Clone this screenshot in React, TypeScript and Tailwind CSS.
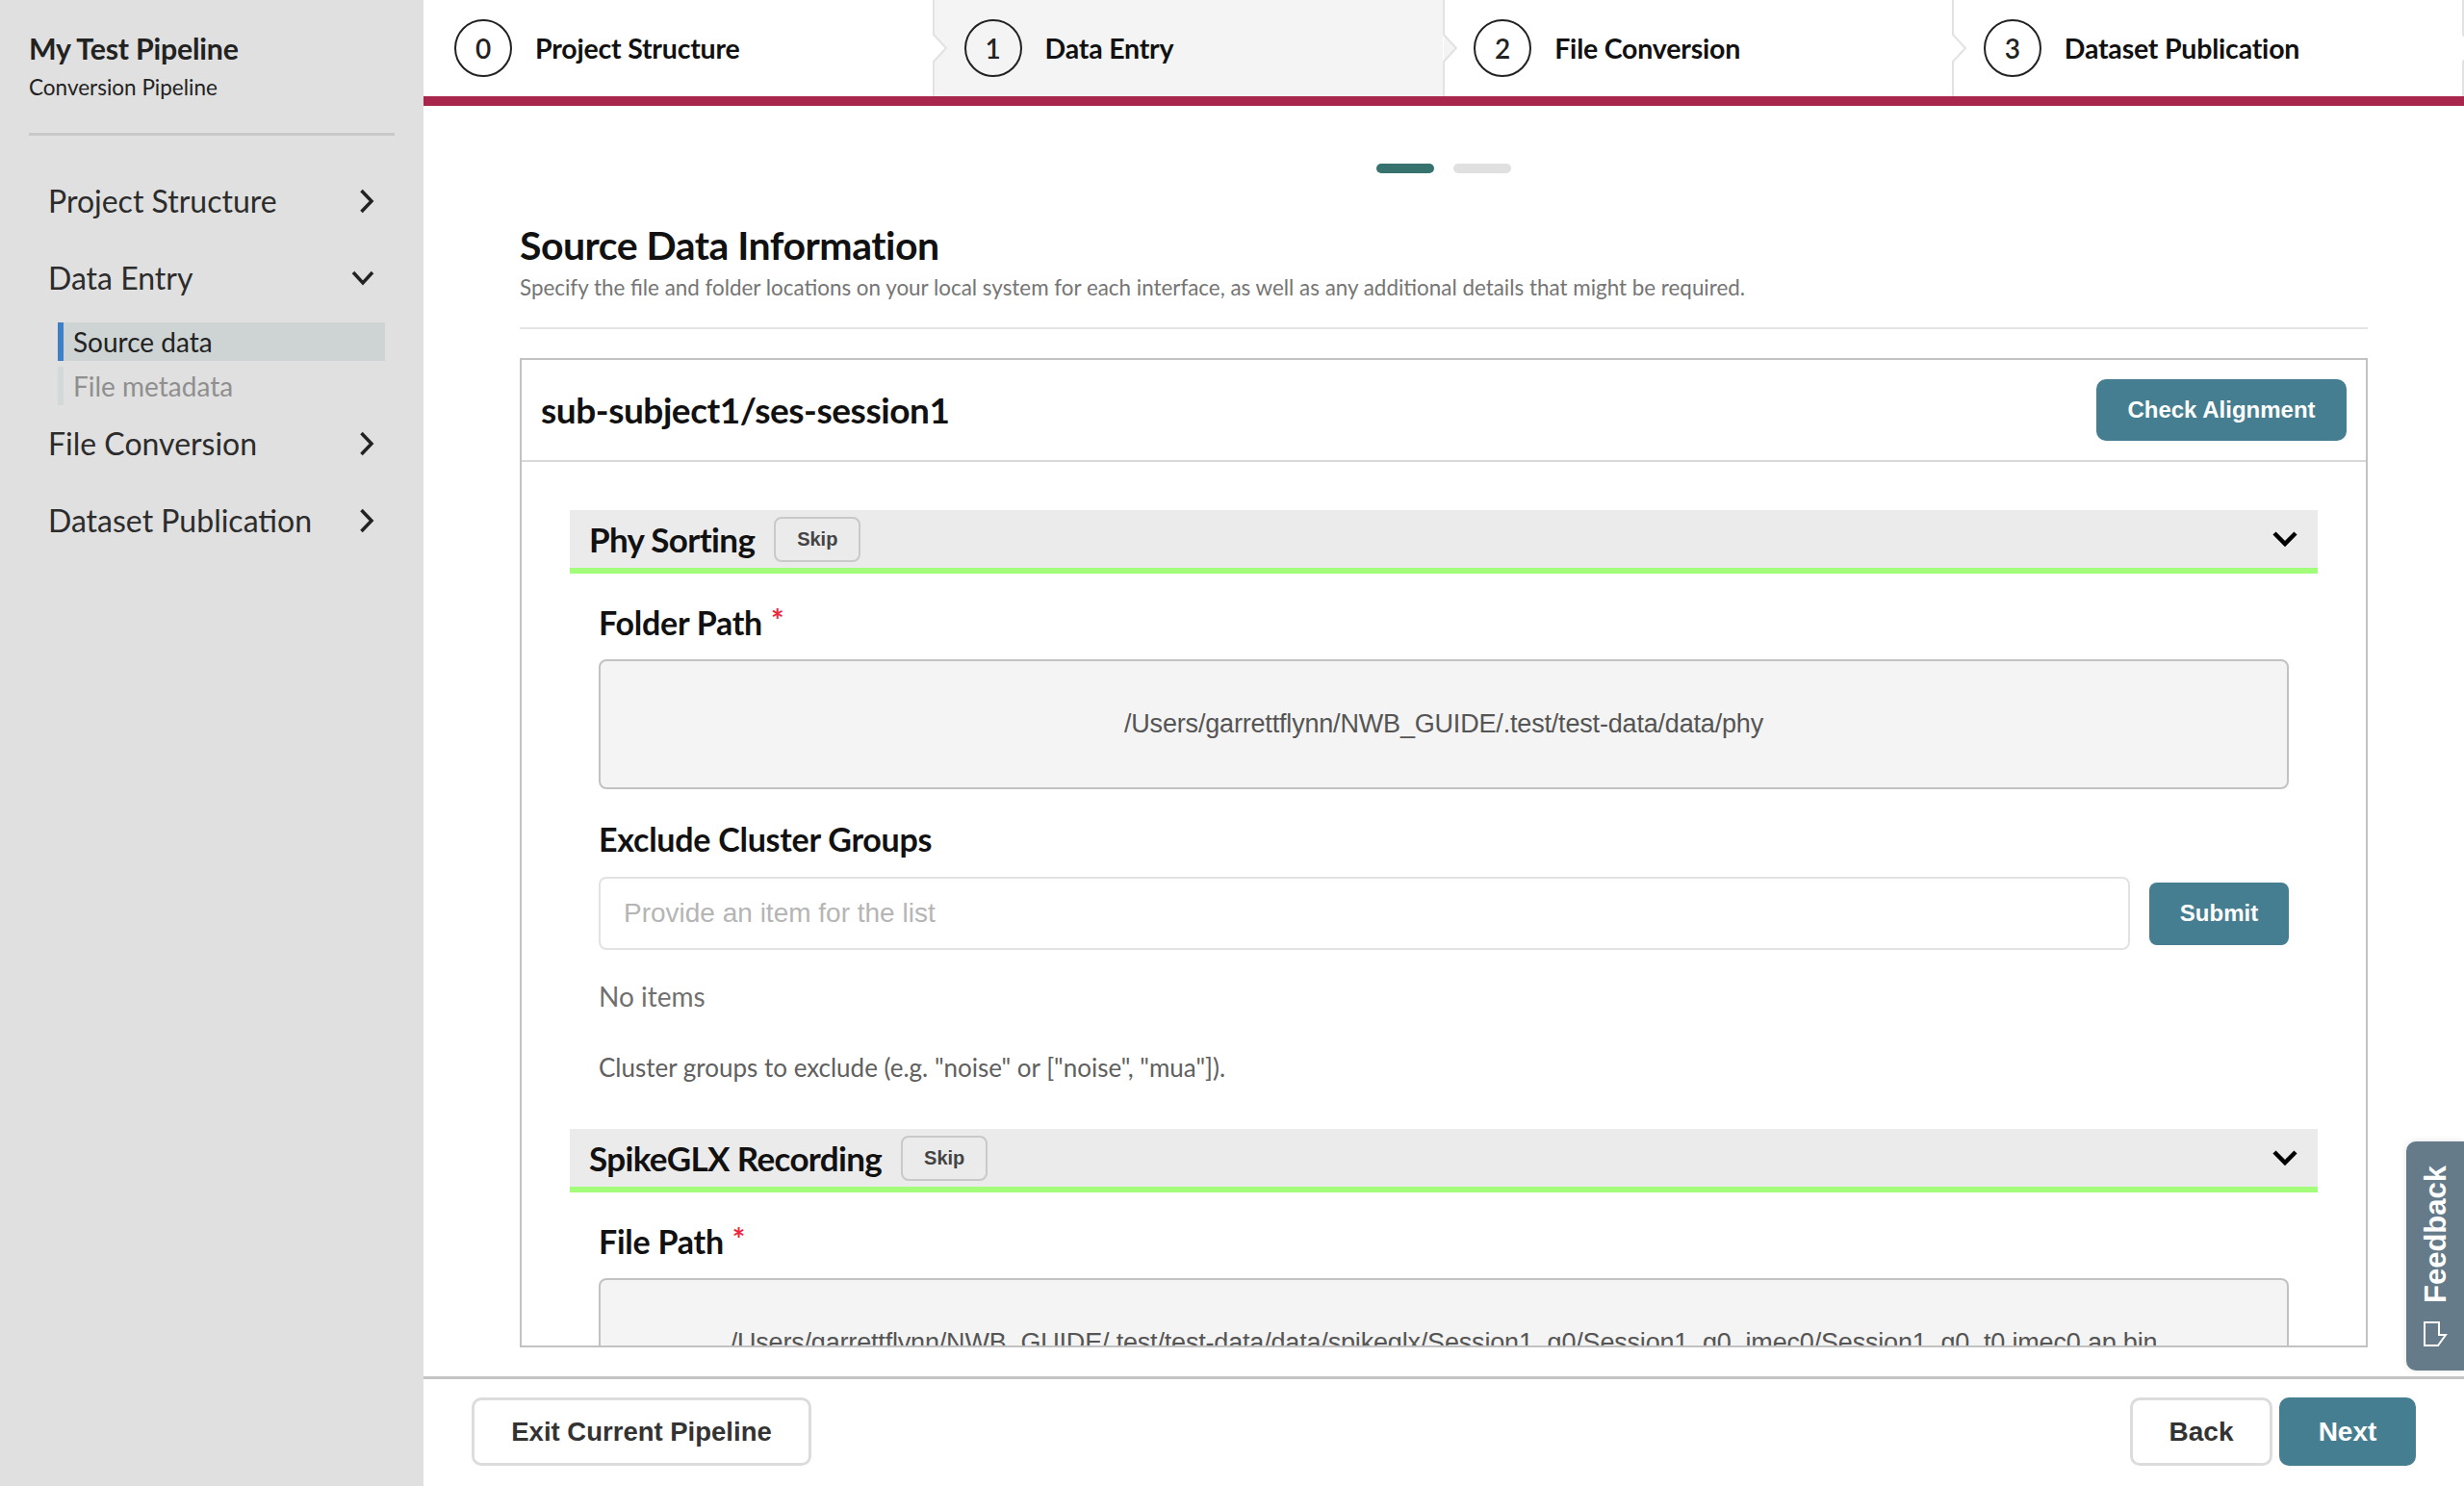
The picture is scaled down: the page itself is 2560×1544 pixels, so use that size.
import React from "react";

const lato = "font-['Lato','Carlito',sans-serif]";
const helv = "font-['Liberation_Sans',Arial,sans-serif]";

function NavChevron({ down = false }: { down?: boolean }) {
  return down ? (
    <svg width="24" height="18" viewBox="0 0 24 18" fill="none" stroke="#222" strokeWidth="3.5">
      <path d="M2 3 12 14 22 3" />
    </svg>
  ) : (
    <svg width="16" height="26" viewBox="0 0 16 26" fill="none" stroke="#222" strokeWidth="3.5">
      <path d="M2.5 2 13 13 2.5 24" />
    </svg>
  );
}

function SectionChevron() {
  return (
    <svg width="26" height="18" viewBox="0 0 26 18" fill="none" stroke="#000" strokeWidth="4.5">
      <path d="M2 3 13 14 24 3" />
    </svg>
  );
}

function Step({ n, label, active = false }: { n: number; label: string; active?: boolean }) {
  return (
    <div className={`relative flex w-[529.6px] items-center pl-[32px] ${active ? "bg-[#f4f4f4]" : "bg-white"}`}>
      <div className="flex h-[60px] w-[60px] items-center justify-center rounded-full border-2 border-[#222] text-[28px] font-semibold text-[#222]">
        {n}
      </div>
      <span className="ml-[24px] text-[28.5px] font-bold tracking-[-0.2px] text-[#111]">{label}</span>
      <svg width="16" height="100" viewBox="0 0 16 100" className="absolute left-[529px] top-0 z-10">
        <path d="M1 0V36L14 50 1 64V100" fill={active ? "#f4f4f4" : "#fff"} stroke="#e2e2e2" strokeWidth="2" />
      </svg>
    </div>
  );
}

function SectionHeader({ title }: { title: string }) {
  return (
    <div className="flex h-[66px] items-center border-b-[6px] border-[#a1fd7a] bg-[#ebebeb] pl-[20px] pr-[21px]">
      <span className="text-[35px] font-bold tracking-[-0.65px] text-[#111]">{title}</span>
      <button className={`${helv} ml-[20px] h-[47px] w-[90px] rounded-[8px] border-2 border-[#c9c9c9] text-[20px] font-bold text-[#444]`}>Skip</button>
      <span className="ml-auto flex"><SectionChevron /></span>
    </div>
  );
}

function Label({ text, required = false }: { text: string; required?: boolean }) {
  return (
    <div className="text-[34px] font-bold leading-[42px] tracking-[-0.25px] text-[#111]">
      {text}
      {required && <span className="relative top-[-3px] ml-[9px] text-[32px] text-[#f0263c]">*</span>}
    </div>
  );
}

function NavItem({ label, open = false }: { label: string; open?: boolean }) {
  return (
    <div className="flex h-[80px] items-center justify-between pl-[50px] pr-[51px] text-[32px] text-[#2c2c2c]">
      <span>{label}</span>
      <NavChevron down={open} />
    </div>
  );
}

export default function App() {
  return (
    <div className={`${lato} relative flex h-[1544px] w-[2560px] overflow-hidden bg-white`}>
      <aside className="flex w-[440px] shrink-0 flex-col bg-[#e0e0e0]">
        <div className="mx-[30px] h-[141px] border-b-[3px] border-[#c9c9c9] pt-[27px]">
          <div className="text-[30.3px] font-bold leading-[46px] tracking-[-0.2px] text-[#222]">My Test Pipeline</div>
          <div className="text-[22.5px] leading-[36px] text-[#222]">Conversion Pipeline</div>
        </div>
        <nav className="pt-[28px]">
          <NavItem label="Project Structure" />
          <NavItem label="Data Entry" open />
          <div className="ml-[60px] mr-[40px] mt-[6px] flex flex-col gap-[6px]">
            <div className="flex h-[40px] items-center border-l-[6px] border-[#3f7fc6] bg-[#ced4d4] pl-[10px] text-[28px] text-[#222]">Source data</div>
            <div className="flex h-[40px] items-center border-l-[6px] border-[#d3d9d9] pl-[10px] text-[28px] text-[#8f8f8f]">File metadata</div>
          </div>
          <NavItem label="File Conversion" />
          <NavItem label="Dataset Publication" />
        </nav>
      </aside>

      <main className="flex min-w-0 flex-1 flex-col">
        <header className="flex h-[110px] shrink-0 border-b-[10px] border-[#a8254b]">
          <Step n={0} label="Project Structure" />
          <Step n={1} label="Data Entry" active />
          <Step n={2} label="File Conversion" />
          <Step n={3} label="Dataset Publication" />
        </header>

        <section className="flex h-[1320px] flex-col overflow-hidden px-[100px]">
          <div className="flex justify-center gap-[20px] pt-[60px]">
            <span className="h-[10px] w-[60px] rounded-full bg-[#36726e]" />
            <span className="h-[10px] w-[60px] rounded-full bg-[#e0e0e0]" />
          </div>
          <h1 className="mt-[50px] text-[41px] font-bold leading-[50px] tracking-[-0.5px] text-[#111]">Source Data Information</h1>
          <p className="mt-[5px] border-b-[2px] border-[#e4e4e4] pb-[27px] text-[22.4px] leading-[28px] text-[#757575]">
            Specify the file and folder locations on your local system for each interface, as well as any additional details that might be required.
          </p>
          <div className="mt-[30px] flex h-[1028px] flex-col overflow-hidden border-2 border-[#c2c2c2]">
            <div className="flex h-[106px] shrink-0 items-center justify-between border-b-2 border-[#d9d9d9] pl-[20px] pr-[20px]">
              <span className="text-[37px] font-bold tracking-[-0.45px] text-[#111]">sub-subject1/ses-session1</span>
              <button className={`${helv} h-[64px] w-[260px] rounded-[10px] bg-[#467e91] text-[24px] font-bold text-white`}>Check Alignment</button>
            </div>
            <div className="px-[50px] pt-[50px]">
              <SectionHeader title="Phy Sorting" />
              <div className="px-[30px]">
                <div className="pt-[30px]"><Label text="Folder Path" required /></div>
                <div className={`${helv} mt-[16px] flex h-[135px] items-center justify-center rounded-[8px] border-2 border-[#c2c2c2] bg-[#f4f4f4] text-[27px] tracking-[-0.18px] text-[#555]`}>
                  /Users/garrettflynn/NWB_GUIDE/.test/test-data/data/phy
                </div>
                <div className="mt-[31px]"><Label text="Exclude Cluster Groups" /></div>
                <div className="mt-[18px] flex items-center gap-[20px]">
                  <div className={`${helv} flex h-[76px] flex-1 items-center rounded-[8px] border-2 border-[#e2e2e2] pl-[24px] text-[28px] text-[#b5b5b5]`}>Provide an item for the list</div>
                  <button className={`${helv} h-[65px] w-[145px] rounded-[8px] bg-[#467e91] text-[24px] font-bold text-white`}>Submit</button>
                </div>
                <div className="mt-[28px] text-[28px] leading-[40px] text-[#707070]">No items</div>
                <div className="mt-[34px] text-[26px] leading-[40px] text-[#606060]">Cluster groups to exclude (e.g. "noise" or ["noise", "mua"]).</div>
              </div>
              <div className="mt-[44px]"><SectionHeader title="SpikeGLX Recording" /></div>
              <div className="px-[30px]">
                <div className="pt-[30px]"><Label text="File Path" required /></div>
                <div className={`${helv} mt-[16px] flex h-[135px] items-center justify-center rounded-[8px] border-2 border-[#c2c2c2] bg-[#f4f4f4] text-[27px] tracking-[-0.18px] text-[#555]`}>
                  /Users/garrettflynn/NWB_GUIDE/.test/test-data/data/spikeglx/Session1_g0/Session1_g0_imec0/Session1_g0_t0.imec0.ap.bin
                </div>
              </div>
            </div>
          </div>
        </section>

        <footer className="flex h-[114px] shrink-0 items-center justify-between border-t-[3px] border-[#c4c4c4] pb-[2px] pl-[50px] pr-[50px]">
          <button className={`${helv} h-[71px] w-[353px] rounded-[10px] border-[3px] border-[#dcdcdc] text-[27.5px] font-bold text-[#333]`}>Exit Current Pipeline</button>
          <div className="flex gap-[7px]">
            <button className={`${helv} h-[71px] w-[148px] rounded-[10px] border-[3px] border-[#dcdcdc] text-[28px] font-bold text-[#333]`}>Back</button>
            <button className={`${helv} h-[71px] w-[142px] rounded-[10px] bg-[#467e91] text-[28px] font-bold text-white`}>Next</button>
          </div>
        </footer>
      </main>

      <div className={`${helv} absolute right-0 top-[1186px] flex h-[238px] w-[60px] flex-col items-center justify-end rounded-l-[10px] bg-[#657b8a] pb-[25px] text-white shadow-[0_0_6px_rgba(0,0,0,0.12)]`}>
        <span className="mb-[19px] pr-[2px] text-[31px] font-bold leading-[30px] [writing-mode:vertical-rl] rotate-180">Feedback</span>
        <svg width="26" height="26" viewBox="0 0 26 26" fill="none" stroke="#fff" strokeWidth="2" className="mr-[1px]">
          <path d="M2 1V25H16L24 14H17V1Z" />
        </svg>
      </div>
    </div>
  );
}
